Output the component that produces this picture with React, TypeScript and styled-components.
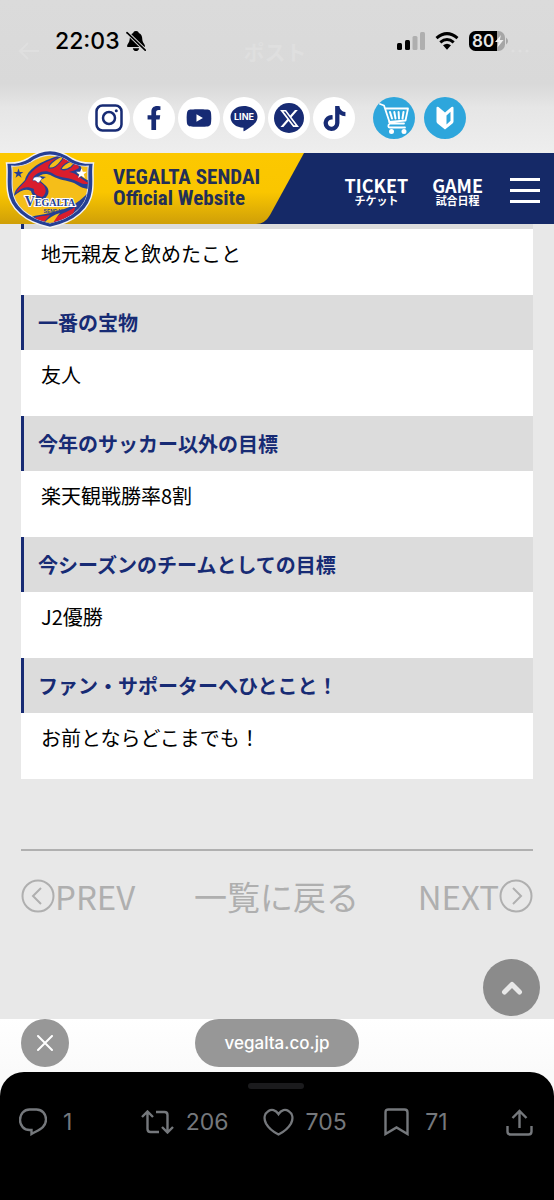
import React from 'react';
import styled, { createGlobalStyle } from 'styled-components';
import { FaFacebookF } from 'react-icons/fa';
import { FaTiktok, FaXTwitter, FaYoutube } from 'react-icons/fa6';

const navy = '#172b74';
const jp = '"Noto Sans CJK JP", sans-serif';
const ui = 'Inter, "Noto Sans CJK JP", sans-serif';

const GlobalStyle = createGlobalStyle`
  *, *::before, *::after { box-sizing: border-box; }
  body { margin: 0; background: #e8e8e8; font-family: ${jp}; color: #000; }
  a { color: inherit; text-decoration: none; }
  button { border: 0; padding: 0; background: none; color: inherit; font: inherit; cursor: pointer; }
  dl, dt, dd, h1, p { margin: 0; }
  svg { display: block; flex: none; }
`;

const Page = styled.div`
  min-height: 100vh;
  display: flex;
  flex-direction: column;
`;

const TopArea = styled.header`
  position: relative;
  background: linear-gradient(#dbdbdb 0, #d9d9d9 84px, #e6e6e6 108px, #eeeeee 153px);
`;

const StatusBar = styled.div`
  height: 97px;
  padding: 26px 46px 0 55px;
  display: flex;
  justify-content: space-between;
  align-items: flex-start;
`;

const StatusGroup = styled.div<{ $gap: number }>`
  height: 30px;
  display: flex;
  align-items: center;
  gap: ${(p) => p.$gap}px;
`;

const Clock = styled.time`
  font: 500 23px/30px ${ui};
`;

const GhostBar = styled.div`
  position: absolute;
  inset: 36px 24px auto 18px;
  height: 30px;
  display: flex;
  align-items: center;
  justify-content: space-between;
  color: #dfdfdf;
  font: 700 21px/30px ${jp};
`;

const SocialRow = styled.nav`
  height: 56px;
  display: flex;
  justify-content: center;
  gap: 3px;
`;

const Round = styled.a<{ $tone?: 'sky'; $lead?: number }>`
  width: 42px;
  height: 42px;
  border-radius: 50%;
  display: flex;
  align-items: center;
  justify-content: center;
  margin-left: ${(p) => p.$lead ?? 0}px;
  background: ${(p) => (p.$tone ? '#2ea6dc' : '#fff')};
  color: ${(p) => (p.$tone ? '#fff' : navy)};
`;

const XDisc = styled.span`
  width: 30px;
  height: 30px;
  border-radius: 50%;
  display: flex;
  align-items: center;
  justify-content: center;
  background: ${navy};
`;

const SiteBar = styled.div`
  position: relative;
  height: 71px;
  display: flex;
  align-items: center;
  justify-content: space-between;
  padding-right: 14px;
  background: #152967;
  color: #fff;
`;

const Brand = styled.a`
  width: 304px;
  height: 71px;
  padding: 14px 0 0 113px;
  background: linear-gradient(#fcc800 0, #fac600 55%, #cf9f08 100%);
  clip-path: path('M0 0H304L270 62Q265 71 256 71H0Z');
  color: #232f57;
  font: 700 21px/21px "Roboto Condensed", "Liberation Sans Narrow", Roboto, sans-serif;
  white-space: nowrap;
`;

const Crest = styled.svg`
  position: absolute;
  left: 5px;
  top: -4px;
`;

const SiteNav = styled.nav`
  display: flex;
  align-items: center;
  gap: 24px;
`;

const NavLink = styled.a`
  display: flex;
  flex-direction: column;
  align-items: center;
  padding-top: 7px;
  font: 700 18px/15px ${jp};
`;

const NavSub = styled.span`
  font-size: 11px;
  line-height: 14px;
`;

const MenuButton = styled.button`
  width: 30px;
  height: 25px;
  margin: 4px 0 0 3px;
  display: flex;
  flex-direction: column;
  justify-content: space-between;
`;

const MenuLine = styled.span`
  width: 100%;
  height: 3px;
  background: #fff;
`;

const Main = styled.main`
  flex: 1;
  padding: 0 21px 98px;
`;

const ScrolledHead = styled.div`
  height: 5px;
  border-left: 3px solid ${navy};
  background: #dcdcdc;
`;

const Question = styled.dt`
  padding: 13px 14px 12px;
  border-left: 3px solid ${navy};
  background: #dcdcdc;
  color: ${navy};
  font-weight: 700;
  font-size: 20px;
  line-height: 30px;
`;

const Answer = styled.dd`
  padding: 10px 20px 26px;
  background: #fff;
  font-size: 20px;
  line-height: 30px;
`;

const Pager = styled.nav`
  margin-top: 70px;
  padding-top: 20px;
  border-top: 2px solid #b0b0b0;
  display: flex;
  justify-content: space-between;
  color: #afafaf;
  font-size: 33px;
  line-height: 50px;
`;

const PagerLink = styled.a`
  display: flex;
  align-items: center;
`;

const ToTop = styled.button`
  position: absolute;
  right: 14px;
  top: -60px;
  width: 57px;
  height: 57px;
  border-radius: 50%;
  background: #8b8b8b;
  display: flex;
  align-items: center;
  justify-content: center;
`;

const BrowserStrip = styled.div`
  position: relative;
  height: 53px;
  padding: 0 21px;
  display: grid;
  grid-template-columns: 1fr auto 1fr;
  align-items: start;
  background: linear-gradient(#fff, #fafafa);
`;

const CloseButton = styled.button`
  width: 48px;
  height: 48px;
  border-radius: 50%;
  background: #979797;
  display: flex;
  align-items: center;
  justify-content: center;
`;

const Address = styled.button`
  height: 48px;
  padding: 0 30px;
  border-radius: 24px;
  background: #979797;
  color: #fff;
  font: 500 17px/48px ${ui};
`;

const DockBack = styled.div`
  background: #fafafa;
`;

const Dock = styled.footer`
  height: 128px;
  padding: 11px 21px 0 19px;
  border-radius: 24px 24px 0 0;
  background: #000;
`;

const Handle = styled.div`
  width: 56px;
  height: 6px;
  margin: 0 auto 16px;
  border-radius: 3px;
  background: #1b1b1d;
`;

const Actions = styled.div`
  display: grid;
  grid-template-columns: repeat(4, 1fr) 27px;
`;

const Action = styled.button<{ $gap?: number }>`
  height: 34px;
  display: flex;
  align-items: center;
  gap: ${(p) => p.$gap ?? 12}px;
  color: #75787c;
  font: 400 23px/34px ${ui};
`;

const profile = [
  { q: '一番の宝物', a: '友人' },
  { q: '今年のサッカー以外の目標', a: '楽天観戦勝率8割' },
  { q: '今シーズンのチームとしての目標', a: 'J2優勝' },
  { q: 'ファン・サポーターへひとこと！', a: 'お前とならどこまでも！' },
];

const line = (width: number) => ({
  fill: 'none',
  stroke: 'currentColor',
  strokeWidth: width,
});

function BellOff() {
  return (
    <svg width="20" height="20" viewBox="0 0 20 20" aria-hidden="true">
      <path d="M10 0C7.8 0 7.3 1.3 7.2 2C4.5 3.2 3.8 5.4 3.7 8.2C3.6 11.6 1 13.2 1 15.2Q1 16 2 16H18Q19 16 19 15.2C19 13.2 16.4 11.6 16.3 8.2C16.2 5.4 15.5 3.2 12.8 2C12.7 1.3 12.2 0 10 0ZM6.8 17.2H13.2Q12.6 20 10 20Q7.4 20 6.8 17.2Z" />
      <path d="M0 .6L20 20" stroke="#dadada" strokeWidth="3.600" />
      <path d="M1 1.6L19.2 19.2" stroke="#000" strokeWidth="1.6" strokeLinecap="round" />
    </svg>
  );
}

function Signal() {
  return (
    <svg width="28" height="18" viewBox="0 0 28 18" aria-label="電波">
      <rect x="0" y="11" width="5" height="7" rx="1.5" />
      <rect x="8" y="8" width="5" height="10" rx="1.5" />
      <rect x="15.500" y="4" width="5" height="14" rx="1.500" fill="#afafaf" />
      <rect x="23" y="0" width="5" height="18" rx="1.500" fill="#afafaf" />
    </svg>
  );
}

function Wifi() {
  return (
    <svg width="24" height="18" viewBox="0 0 24 18" aria-label="Wi-Fi">
      <path d="M1.500 6.200Q12 -3 22.500 6.200M5.300 10.400Q12 4.600 18.700 10.400" fill="none" stroke="#000" strokeWidth="3" />
      <path d="M8 13.300Q12 10 16 13.300L12 17.800Z" />
    </svg>
  );
}

function Battery() {
  return (
    <svg width="39" height="20" viewBox="0 0 39 20" aria-label="バッテリー 80%">
      <defs>
        <clipPath id="cell"><rect width="36" height="20" rx="6.500" /></clipPath>
      </defs>
      <g clipPath="url(#cell)">
        <rect width="36" height="20" fill="#a6a6a6" />
        <rect width="28" height="20" />
      </g>
      <path d="M37 6.500Q39 8 39 10T37 13.500Z" fill="#a6a6a6" />
      <text x="3" y="16" fill="#e6e6e6" fontFamily="Inter, sans-serif" fontWeight="600" fontSize="17">80</text>
      <path d="M32 4L26 11H29.500L28.500 16.500L34.500 9H30.800Z" fill="#eee" />
    </svg>
  );
}

function Instagram() {
  return (
    <svg width="28" height="28" viewBox="0 0 28 28" {...line(2.5)}>
      <rect x="1.500" y="1.500" width="25" height="25" rx="6" />
      <circle cx="14" cy="14" r="6" />
      <circle cx="21.300" cy="6.700" r="1.500" fill="currentColor" stroke="none" />
    </svg>
  );
}

function LineBubble() {
  return (
    <svg width="28" height="27" viewBox="0 0 28 27" fill="currentColor">
      <path d="M14 1C21.500 1 27.500 5.800 27.500 12C27.500 18.500 20 22.500 14.500 26C13 26.800 13.500 24.500 13.500 22.800C6 22.600 .5 18 .5 12C.5 5.800 6.500 1 14 1Z" />
      <text x="14" y="15" fill="#fff" textAnchor="middle" fontFamily="Inter, sans-serif" fontWeight="700" fontSize="9">LINE</text>
    </svg>
  );
}

function Cart() {
  return (
    <svg width="32" height="32" viewBox="0 0 32 32" {...line(1.8)} strokeLinecap="round" strokeLinejoin="round">
      <path d="M2 2L6 3.500L12 21.500H26M7.500 6.500H30L27.500 18.500L11 20M12 21.500C9.500 23 10 25.500 12 25.500H27" />
      <path d="M12 10L14 16.500M16.300 10L17.500 16.500M20.600 10L21 16.500M25.500 10L24.500 16.500" strokeWidth="2" />
      <circle cx="13.500" cy="29.500" r="1.600" fill="#fff" />
      <circle cx="26" cy="29.500" r="1.600" fill="#fff" />
    </svg>
  );
}

function BeginnerMark() {
  return (
    <svg width="18" height="24" viewBox="0 0 18 24">
      <path d="M.5 2Q.5 0 2.500 1L9 6.500L15.500 1Q17.500 0 17.500 2V15.500Q17.500 16.500 16.500 17.500L9 23.500L1.500 17.500Q.5 16.500 .5 15.500Z" fill="#fff" />
      <path d="M10.500 9.500L14.500 5.800V14.800L10.500 18.500Z" fill="#2ea6dc" />
    </svg>
  );
}

const shield = 'M45 1.500C54 1.500 62 6 67 9.500C73 13 81 14.500 88.500 14C87 23 89 31 87.500 42C85.500 59 71 73 45 78.500C19 73 4.500 59 2.500 42C1 31 3 23 1.500 14C9 14.500 17 13 23 9.500C28 6 36 1.500 45 1.500Z';

function ClubCrest() {
  return (
    <Crest width="90" height="80" viewBox="0 0 90 80" role="img" aria-label="VEGALTA SENDAI">
      <defs>
        <clipPath id="shield"><path d={shield} transform="translate(5.400 4.800) scale(.88)" /></clipPath>
      </defs>
      <path d={shield} fill="#253f94" stroke="#f4f4f4" strokeWidth="1.500" />
      <path d={shield} fill="#f5be19" stroke="#dfe4ef" strokeWidth="1.200" transform="translate(5.400 4.800) scale(.88)" />
      <g clipPath="url(#shield)">
        <path d="M9 47C10 39 16 36 20 31C23 20 34 12 60 5L66 10C74 14 77 18 77 22L72 24C77 28 81 31 85 32V40C78 40 74 37 69 34C61 31 54 31 47 27C40 23 35 26 32 29L40 36C45 40 45 46 38 51C32 50 27 47 26 42C20 39 15 42 9 47Z" fill="#253f94" />
        <path d="M11 44C13 38 19 35 22 30C26 20 40 12 58 7C66 10 74 15 74 19C71 21 67 22 64 23C73 24 78 33 85 34C79 37 74 33 69 31C61 28 53 29 47 24C39 20 31 24 28 29L36 34C41 37 43 44 37 48C32 47 28 44 29 40C21 36 16 39 11 44Z" fill="#d91d2c" />
        <path d="M44 19C43 16 49 11 55 8C58 7 59 9 56 12C53 16 49 20 44 19ZM56 20C57 17 62 13 67 12C71 12 69 15 66 18C63 20 60 22 56 20Z" fill="#f5be19" stroke="#253f94" strokeWidth="1.200" />
        <path d="M28 32C27 27 33 27 39 29C35 30 36 33 33 34C31 32 30 31 28 32Z" fill="#fff" stroke="#253f94" strokeWidth=".600" />
        <path d="M35 27L41 28L37 30Z" fill="#253f94" />
        <path d="M20 71C34 64 36 67 48 63C58 60 67 60 83 44L81 63L50 79Z" fill="#253f94" />
        <path d="M27 70C36 66 41 67 45 66L38 74ZM47 72C54 64 62 64 70 58C70 67 60 72 47 76Z" fill="#d91d2c" />
        <path d="M38 75C43 69 49 66 55 64C51 68 49 73 46 77Z" fill="#f5be19" />
      </g>
      <path d="M13.500 19.500L14.700 23H18.300L15.400 25.200L16.500 28.800L13.500 26.600L10.500 28.800L11.600 25.200L8.700 23H12.300Z" fill="#253f94" />
      <path d="M76.500 19L77.800 22.800H82L78.700 25.200L80 29L76.500 26.700L73 29L74.300 25.200L71 22.800H75.200Z" fill="#fff" />
      <g textAnchor="middle" fontFamily='"Liberation Serif", serif' fontWeight="700" fill="#253f94">
        <text x="45" y="57" fontSize="10" stroke="#fff" strokeWidth="2" paintOrder="stroke">
          <tspan fontSize="14">V</tspan>EGALTA
        </text>
        <text x="48" y="64" fontSize="5" fontFamily='"Liberation Sans", sans-serif'>SENDAI</text>
      </g>
    </Crest>
  );
}

function RoundArrow({ d }: { d: string }) {
  return (
    <svg width="34" height="34" viewBox="0 0 34 34" {...line(2)} aria-hidden="true">
      <circle cx="17" cy="17" r="15.500" />
      <path d={d} />
    </svg>
  );
}

export default function App() {
  return (
    <Page>
      <GlobalStyle />
      <TopArea>
        <GhostBar aria-hidden="true">
          <svg width="22" height="20" viewBox="0 0 22 20" {...line(2)}><path d="M21 10H2M10 2L2 10L10 18" /></svg>
          <span>ポスト</span>
          <svg width="20" height="4" viewBox="0 0 20 4" fill="currentColor"><circle cx="3" cy="2" r="1.500" /><circle cx="10" cy="2" r="1.500" /><circle cx="17" cy="2" r="1.500" /></svg>
        </GhostBar>
        <StatusBar>
          <StatusGroup $gap={6}>
            <Clock>22:03</Clock>
            <BellOff />
          </StatusGroup>
          <StatusGroup $gap={10}>
            <Signal />
            <Wifi />
            <Battery />
          </StatusGroup>
        </StatusBar>
        <SocialRow aria-label="SNS">
          <Round href="#instagram" aria-label="Instagram"><Instagram /></Round>
          <Round href="#facebook" aria-label="Facebook"><FaFacebookF size={24} /></Round>
          <Round href="#youtube" aria-label="YouTube"><FaYoutube size={26} /></Round>
          <Round href="#line" aria-label="LINE"><LineBubble /></Round>
          <Round href="#x" aria-label="X"><XDisc><FaXTwitter size={21} color="#fff" /></XDisc></Round>
          <Round href="#tiktok" aria-label="TikTok"><FaTiktok size={25} /></Round>
          <Round href="#shop" aria-label="ショップ" $tone="sky" $lead={15}><Cart /></Round>
          <Round href="#guide" aria-label="ガイド" $tone="sky" $lead={6}><BeginnerMark /></Round>
        </SocialRow>
        <SiteBar>
          <Brand href="#home">VEGALTA SENDAI<br />Official Website</Brand>
          <ClubCrest />
          <SiteNav>
            <NavLink href="#ticket">TICKET<NavSub>チケット</NavSub></NavLink>
            <NavLink href="#game">GAME<NavSub>試合日程</NavSub></NavLink>
            <MenuButton aria-label="メニュー"><MenuLine /><MenuLine /><MenuLine /></MenuButton>
          </SiteNav>
        </SiteBar>
      </TopArea>

      <Main>
        <ScrolledHead />
        <Answer as="p">地元親友と飲めたこと</Answer>
        <dl>
          {profile.map(({ q, a }) => (
            <React.Fragment key={q}>
              <Question>{q}</Question>
              <Answer>{a}</Answer>
            </React.Fragment>
          ))}
        </dl>
        <Pager aria-label="ページ送り">
          <PagerLink href="#prev"><RoundArrow d="M20 9L12 17L20 25" />PREV</PagerLink>
          <PagerLink href="#list">一覧に戻る</PagerLink>
          <PagerLink href="#next">NEXT<RoundArrow d="M14 9L22 17L14 25" /></PagerLink>
        </Pager>
      </Main>

      <BrowserStrip>
        <ToTop aria-label="ページの先頭へ">
          <svg width="22" height="16" viewBox="0 0 22 16" fill="none" stroke="#e8e8e8" strokeWidth="5" strokeLinecap="round" strokeLinejoin="round"><path d="M3.500 12L11 4.500L18.500 12" /></svg>
        </ToTop>
        <CloseButton aria-label="閉じる">
          <svg width="16" height="16" viewBox="0 0 16 16" fill="none" stroke="#fff" strokeWidth="2" strokeLinecap="round"><path d="M1 1L15 15M15 1L1 15" /></svg>
        </CloseButton>
        <Address>vegalta.co.jp</Address>
      </BrowserStrip>

      <DockBack>
        <Dock>
          <Handle />
          <Actions>
            <Action aria-label="返信 1" $gap={16}>
              <svg width="28" height="28" viewBox="0 0 28 28" {...line(2.4)}><path d="M10.500 1.500H17.500C23 1.500 27 6 27 11.500C27 20 19 22 12.500 26V22H10.500C5 22 1 17.500 1 12C1 6 5 1.500 10.500 1.500Z" /></svg>
              1
            </Action>
            <Action aria-label="リポスト 206">
              <svg width="33" height="24" viewBox="0 0 33 24" {...line(2.4)}><path d="M1 7L6.500 1.500L12 7M6.500 2V19Q6.500 22 9.500 22H18M15 2H23.500Q26.500 2 26.500 5V22M21 17L26.500 22.500L32 17" /></svg>
              206
            </Action>
            <Action aria-label="いいね 705">
              <svg width="31" height="28" viewBox="0 0 31 28" {...line(2.4)}><path d="M15.500 6C18.500 1.500 22.500 1 25.500 3C29.500 5.500 30.500 10.500 28 15.500C25.500 20 21.500 23.500 15.500 26.500C9.500 23.500 5.500 20 3 15.500C.5 10.500 1.500 5.500 5.500 3C8.500 1 12.500 1.500 15.500 6Z" /></svg>
              705
            </Action>
            <Action aria-label="ブックマーク 71" $gap={16}>
              <svg width="25" height="28" viewBox="0 0 25 28" {...line(2.4)}><path d="M1.500 26V4.500Q1.500 1.500 4.500 1.500H20.500Q23.500 1.500 23.500 4.500V26L12.500 19.500Z" /></svg>
              71
            </Action>
            <Action aria-label="共有">
              <svg width="27" height="27" viewBox="0 0 27 27" {...line(2.4)}><path d="M13.500 19V2M6.500 9L13.500 2L20.500 9M1.500 17V22.500Q1.500 25.500 4.500 25.500H22.500Q25.500 25.500 25.500 22.500V17" /></svg>
            </Action>
          </Actions>
        </Dock>
      </DockBack>
    </Page>
  );
}
